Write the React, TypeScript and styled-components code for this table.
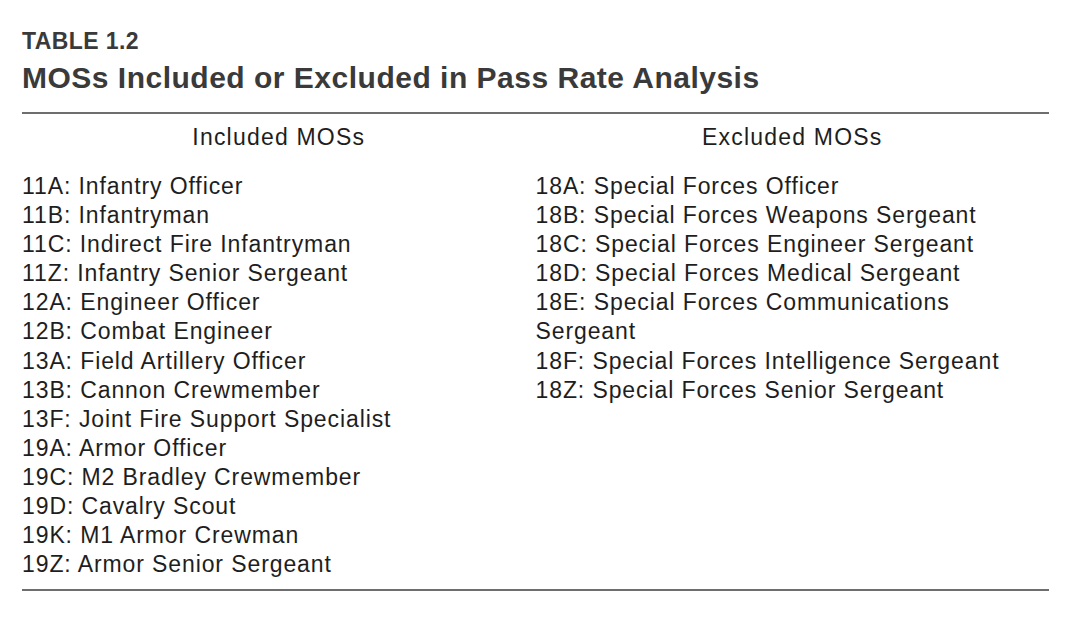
import React from "react";
import styled, { createGlobalStyle } from "styled-components";

const Global = createGlobalStyle`
  html, body { margin: 0; padding: 0; background: #ffffff; }
  body { font-family: "Liberation Sans", Arial, Helvetica, sans-serif; }
`;

const Page = styled.div`
  width: 1079px;
  height: 623px;
  box-sizing: border-box;
  padding: 30px 30px 0 22px;
  background: #ffffff;
`;

const Label = styled.div`
  font-size: 23px;
  line-height: 23px;
  font-weight: 700;
  color: #3a3a3a;
  letter-spacing: 0.4px;
`;

const Title = styled.h1`
  margin: 9px 0 0;
  font-size: 30px;
  line-height: 32px;
  font-weight: 700;
  color: #3a3a3a;
  letter-spacing: 0.5px;
`;

const Table = styled.div`
  margin-top: 18px;
  border-top: 2px solid #6e6e6e;
  border-bottom: 2px solid #6e6e6e;
  display: grid;
  grid-template-columns: 1fr 1fr;
  padding: 9px 0 10px;
`;

const Column = styled.div`
  display: flex;
  flex-direction: column;
`;

const Head = styled.div`
  text-align: center;
  font-size: 23px;
  line-height: 29px;
  color: #1e1e1e;
  letter-spacing: 1.2px;
  margin-bottom: 20px;
`;

const Item = styled.div`
  font-size: 23px;
  line-height: 29.1px;
  color: #1e1e1e;
  letter-spacing: 0.9px;
`;

const included = [
  "11A: Infantry Officer",
  "11B: Infantryman",
  "11C: Indirect Fire Infantryman",
  "11Z: Infantry Senior Sergeant",
  "12A: Engineer Officer",
  "12B: Combat Engineer",
  "13A: Field Artillery Officer",
  "13B: Cannon Crewmember",
  "13F: Joint Fire Support Specialist",
  "19A: Armor Officer",
  "19C: M2 Bradley Crewmember",
  "19D: Cavalry Scout",
  "19K: M1 Armor Crewman",
  "19Z: Armor Senior Sergeant",
];

const excluded = [
  "18A: Special Forces Officer",
  "18B: Special Forces Weapons Sergeant",
  "18C: Special Forces Engineer Sergeant",
  "18D: Special Forces Medical Sergeant",
  "18E: Special Forces Communications",
  "Sergeant",
  "18F: Special Forces Intelligence Sergeant",
  "18Z: Special Forces Senior Sergeant",
];

export default function App() {
  return (
    <>
      <Global />
      <Page>
        <Label>TABLE 1.2</Label>
        <Title>MOSs Included or Excluded in Pass Rate Analysis</Title>
        <Table>
          <Column>
            <Head>Included MOSs</Head>
            {included.map((t) => (
              <Item key={t}>{t}</Item>
            ))}
          </Column>
          <Column>
            <Head>Excluded MOSs</Head>
            {excluded.map((t) => (
              <Item key={t}>{t}</Item>
            ))}
          </Column>
        </Table>
      </Page>
    </>
  );
}
